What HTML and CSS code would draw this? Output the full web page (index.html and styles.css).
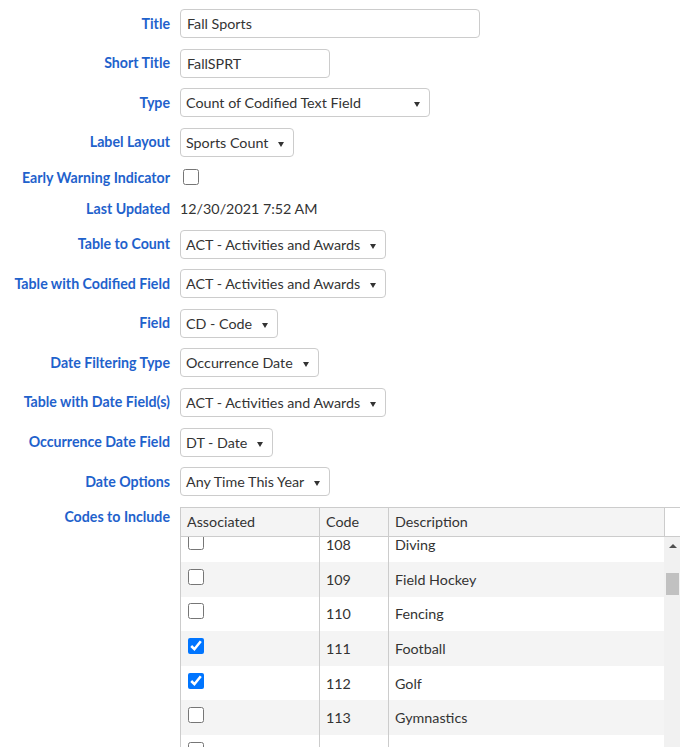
FILE: index.html
```html
<!DOCTYPE html>
<html lang="en">
<head>
<meta charset="utf-8">
<title>Fall Sports</title>
<link rel="stylesheet" href="styles.css">
</head>
<body>
<div class="form">
  <div class="label">Title</div>
  <div class="field"><div class="input w-title">Fall Sports</div></div>

  <div class="label">Short Title</div>
  <div class="field"><div class="input w-short">FallSPRT</div></div>

  <div class="label">Type</div>
  <div class="field"><div class="select w-type"><span class="sel-text">Count of Codified Text Field</span><span class="caret"></span></div></div>

  <div class="label">Label Layout</div>
  <div class="field"><div class="select"><span class="sel-text">Sports Count</span><span class="caret"></span></div></div>

  <div class="label">Early Warning Indicator</div>
  <div class="field"><input type="checkbox" class="check check-ewi"></div>

  <div class="label">Last Updated</div>
  <div class="field"><span class="static">12/30/2021 7:52 AM</span></div>

  <div class="label">Table to Count</div>
  <div class="field"><div class="select"><span class="sel-text">ACT - Activities and Awards</span><span class="caret"></span></div></div>

  <div class="label">Table with Codified Field</div>
  <div class="field"><div class="select"><span class="sel-text">ACT - Activities and Awards</span><span class="caret"></span></div></div>

  <div class="label">Field</div>
  <div class="field"><div class="select"><span class="sel-text">CD - Code</span><span class="caret"></span></div></div>

  <div class="label">Date Filtering Type</div>
  <div class="field"><div class="select"><span class="sel-text">Occurrence Date</span><span class="caret"></span></div></div>

  <div class="label">Table with Date Field(s)</div>
  <div class="field"><div class="select"><span class="sel-text">ACT - Activities and Awards</span><span class="caret"></span></div></div>

  <div class="label">Occurrence Date Field</div>
  <div class="field"><div class="select"><span class="sel-text">DT - Date</span><span class="caret"></span></div></div>

  <div class="label">Date Options</div>
  <div class="field"><div class="select"><span class="sel-text">Any Time This Year</span><span class="caret"></span></div></div>

  <div class="label label-top">Codes to Include</div>
  <div class="field field-table">
    <div class="codes">
      <div class="thead">
        <div class="th">Associated</div>
        <div class="th">Code</div>
        <div class="th">Description</div>
        <div class="th th-gutter"></div>
      </div>
      <div class="tbody-wrap">
        <div class="tbody">
          <div class="tr"><div class="td"><input type="checkbox" class="check"></div><div class="td">108</div><div class="td">Diving</div></div>
          <div class="tr alt"><div class="td"><input type="checkbox" class="check"></div><div class="td">109</div><div class="td">Field Hockey</div></div>
          <div class="tr"><div class="td"><input type="checkbox" class="check"></div><div class="td">110</div><div class="td">Fencing</div></div>
          <div class="tr alt"><div class="td"><input type="checkbox" class="check" checked></div><div class="td">111</div><div class="td">Football</div></div>
          <div class="tr"><div class="td"><input type="checkbox" class="check" checked></div><div class="td">112</div><div class="td">Golf</div></div>
          <div class="tr alt"><div class="td"><input type="checkbox" class="check"></div><div class="td">113</div><div class="td">Gymnastics</div></div>
          <div class="tr"><div class="td"><input type="checkbox" class="check"></div><div class="td"></div><div class="td"></div></div>
        </div>
        <div class="scrollbar">
          <span class="sb-up"></span>
          <span class="sb-thumb"></span>
        </div>
      </div>
    </div>
  </div>
</div>
</body>
</html>
```

FILE: styles.css
```css
* { box-sizing: border-box; }

html, body {
  margin: 0;
  padding: 0;
  background: #ffffff;
}

body {
  width: 680px;
  height: 747px;
  overflow: hidden;
  font-family: "Lato", "Open Sans", sans-serif;
  font-size: 14.3px;
  color: #333333;
}

.form {
  display: grid;
  grid-template-columns: 170px 1fr;
  column-gap: 10px;
  row-gap: 10.6px;
  padding-top: 9px;
}

.label {
  text-align: right;
  font-weight: 700;
  font-size: 14.2px;
  color: #1f62cc;
  align-self: center;
  line-height: 20px;
  white-space: nowrap;
}

.label-top {
  align-self: start;
}

.field {
  display: flex;
  align-items: center;
  min-width: 0;
}

.input {
  height: 29px;
  border: 1px solid #cccccc;
  border-radius: 4px;
  padding: 0 6px;
  display: flex;
  align-items: center;
  color: #333333;
}

.w-title { width: 300px; }
.w-short { width: 150px; }

.select {
  height: 29px;
  border: 1px solid #cccccc;
  border-radius: 4px;
  padding: 0 9px 0 5px;
  display: inline-flex;
  align-items: center;
  gap: 10px;
  white-space: nowrap;
}

.w-type {
  width: 250px;
  justify-content: space-between;
}

.caret {
  width: 0;
  height: 0;
  border-left: 3.5px solid transparent;
  border-right: 3.5px solid transparent;
  border-top: 5px solid #333333;
  margin-top: 4px;
}

.check {
  width: 16px;
  height: 16px;
  margin: 0;
}

.check-ewi {
  margin: 2px 0 3px 3px;
}

.static {
  line-height: 20px;
  color: #333333;
}

/* codes table */
.field-table {
  align-items: flex-start;
  overflow: visible;
}

.codes {
  width: 530px;
  flex: none;
  border-top: 1px solid #cccccc;
  border-left: 1px solid #cccccc;
}

.thead {
  display: grid;
  grid-template-columns: 139px 69px 276px 1fr;
  height: 29px;
  border-bottom: 1px solid #cccccc;
}

.th {
  background: #f4f4f4;
  border-right: 1px solid #cccccc;
  padding: 0 6px;
  display: flex;
  align-items: center;
  color: #333333;
}

.th-gutter {
  background: #ffffff;
}

.tbody-wrap {
  display: grid;
  grid-template-columns: 483px 17px;
  height: 240px;
  overflow: hidden;
}

.tbody {
  margin-top: -9.3px;
}

.tr {
  display: grid;
  grid-template-columns: 139px 69px 275px;
  height: 34.6px;
  background: #ffffff;
}

.tr.alt {
  background: #f4f4f4;
}

.td {
  display: flex;
  align-items: center;
  padding: 0 6px;
  border-right: 1px solid #cccccc;
}

.td:first-child {
  padding-left: 7px;
}

.td:first-child .check {
  margin-bottom: 5px;
}

.td:last-child {
  border-right: none;
}

.scrollbar {
  background: #f1f1f1;
  display: flex;
  flex-direction: column;
  align-items: flex-start;
}

.sb-up {
  width: 0;
  height: 0;
  border-left: 4px solid transparent;
  border-right: 4px solid transparent;
  border-bottom: 4px solid #505050;
  margin: 7px 0 0 5px;
}

.sb-thumb {
  width: 13px;
  height: 22px;
  background: #c1c1c1;
  margin: 25px 0 0 2px;
}
```
